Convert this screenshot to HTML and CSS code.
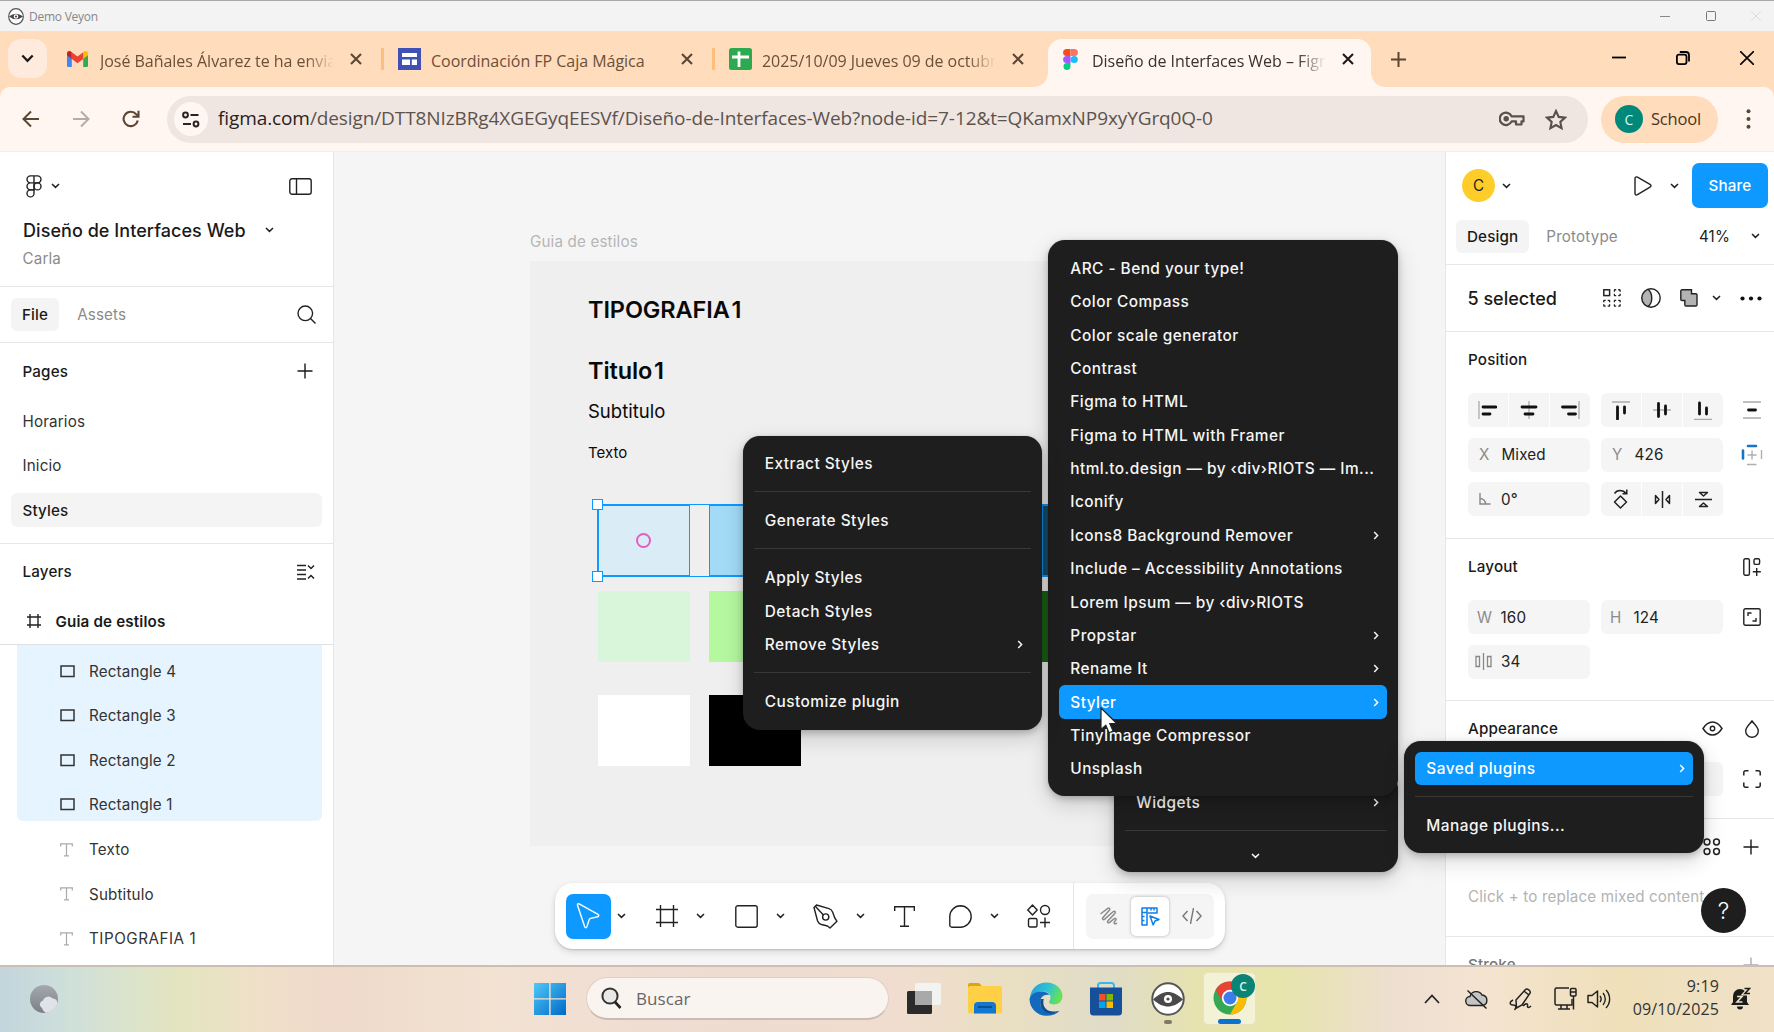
FILE: index.html
```html
<!DOCTYPE html>
<html lang="es">
<head>
<meta charset="utf-8">
<title>Demo Veyon</title>
<link rel="stylesheet" href="styles.css">
</head>
<body>
<svg class="defs" width="0" height="0" aria-hidden="true">
  <symbol id="down" viewBox="0 0 9 6"><path d="M1 1l3.5 3.4L8 1" fill="none" stroke="currentColor" stroke-width="1.5"/></symbol>
  <symbol id="right" viewBox="0 0 6 9"><path d="M1.2 1l3.4 3.5L1.2 8" fill="none" stroke="currentColor" stroke-width="1.5"/></symbol>
  <symbol id="x" viewBox="0 0 12 12"><path d="M1 1l10 10M11 1L1 11" fill="none" stroke="currentColor" stroke-width="2.1"/></symbol>
  <symbol id="rect" viewBox="0 0 15 13"><path d="M1 1h13v10.6H1z" fill="none" stroke="currentColor" stroke-width="1.5"/></symbol>
  <symbol id="tee" viewBox="0 0 13 14"><path d="M.7 3.4V.8h11.6v2.6M6.5.8v12M4 12.9h5" fill="none" stroke="currentColor" stroke-width="1.2"/></symbol>
  <symbol id="plus" viewBox="0 0 16 16"><path d="M8 .5v15M.5 8h15" fill="none" stroke="currentColor" stroke-width="1.4"/></symbol>
  <symbol id="dashed" viewBox="0 0 8 8"><path d="M.8 2.700V1.300a.5.5 0 0 1 .5-.5h1.400M4.700.8h1.400a.5.5 0 0 1 .5.5v1.400M6.600 4.700v1.400a.5.5 0 0 1-.5.5H4.700M2.700 6.600H1.300a.5.5 0 0 1-.5-.5V4.700" fill="none" stroke="currentColor" stroke-width="1.400"/></symbol>
</svg>

<header class="titlebar">
  <svg class="veyon" width="16" height="17" viewBox="0 0 16 17"><ellipse cx="8" cy="8.5" rx="7.3" ry="7.8" fill="#fff" stroke="#555" stroke-width="1.2"/><path d="M1 8.5Q8 2.8 15 8.5 8 14 1 8.5z" fill="#444"/><circle cx="8" cy="8.5" r="2.3" fill="#fff"/><circle cx="8" cy="8.5" r="1.1" fill="#444"/></svg>
  <span class="titlebar-name">Demo Veyon</span>
  <div class="titlebar-controls">
    <svg width="10" height="10" viewBox="0 0 10 10"><path d="M0 5.5h10" stroke="#888"/></svg>
    <svg width="10" height="10" viewBox="0 0 10 10"><rect x=".5" y=".5" width="9" height="9" rx="1" fill="none" stroke="#777"/></svg>
    <svg width="10" height="10" viewBox="0 0 10 10"><path d="M0 0l10 10M10 0L0 10" stroke="#dcdcdc"/></svg>
  </div>
</header>

<div class="tabstrip">
  <div class="tab-search"><svg width="13" height="9" viewBox="0 0 13 9"><path d="M1.3 1.5l5.2 5.3 5.2-5.3" fill="none" stroke="#201a17" stroke-width="2.3"/></svg></div>
  <div class="tab">
    <div class="tab-icon"><svg width="21" height="16" viewBox="0 0 21 16"><path d="M0 3v11.5A1.5 1.5 0 0 0 1.500 16H4.800V7z" fill="#4285f4"/><path d="M21 3v11.500a1.500 1.500 0 0 1-1.500 1.500H16.200V7z" fill="#34a853"/><path d="M0 2.500C0 0 2.500-.6 4.300.8l.5.5V8L0 4.300z" fill="#c5221f"/><path d="M21 2.500c0-2.500-2.500-3.100-4.300-1.700l-.5.5V8L21 4.300z" fill="#fbbc04"/><path d="M4.800 1.200l5.700 4.400 5.700-4.400V8l-5.700 4.300L4.800 8z" fill="#ea4335"/></svg></div>
    <span class="tab-text fade">José Bañales Álvarez te ha enviado</span>
    <svg class="tab-x" width="12" height="12"><use href="#x"/></svg>
  </div>
  <div class="tab">
    <div class="tab-icon"><svg width="23" height="22" viewBox="0 0 23 22"><rect width="23" height="22" fill="#3f51b5"/><path d="M4 5h15v4H4zM4 11.500h8V17H4zM13.800 11.500H19V17h-5.200z" fill="#fff"/></svg></div>
    <span class="tab-text">Coordinación FP Caja Mágica</span>
    <svg class="tab-x" width="12" height="12"><use href="#x"/></svg>
  </div>
  <div class="tab last">
    <div class="tab-icon"><svg width="23" height="22" viewBox="0 0 23 22"><rect width="23" height="22" rx="2.500" fill="#2da94f"/><path d="M10 3.500v15.500M3 9h17" stroke="#fff" stroke-width="2.800"/></svg></div>
    <span class="tab-text fade">2025/10/09 Jueves 09 de octubre</span>
    <svg class="tab-x" width="12" height="12"><use href="#x"/></svg>
  </div>
  <div class="tab active">
    <div class="tab-icon"><svg width="15" height="21" viewBox="0 0 15 21"><path d="M7.500 0H3.600a3.500 3.500 0 0 0 0 7h3.900z" fill="#f24e1e"/><path d="M7.500 0h3.900a3.500 3.500 0 0 1 0 7H7.500z" fill="#ff7262"/><path d="M7.500 7H3.600a3.500 3.500 0 0 0 0 7h3.900z" fill="#a259ff"/><circle cx="11.200" cy="10.500" r="3.600" fill="#1abcfe"/><path d="M7.500 14H3.700a3.500 3.500 0 1 0 3.800 3.500z" fill="#0acf83"/></svg></div>
    <span class="tab-text fade">Diseño de Interfaces Web – Figma</span>
    <svg class="tab-x" width="12" height="12"><use href="#x"/></svg>
  </div>
  <svg class="newtab" width="15" height="15" viewBox="0 0 15 15"><path d="M7.500 0v15M0 7.500h15" stroke="#5b4636" stroke-width="2"/></svg>
  <div class="window-controls">
    <svg width="14" height="14" viewBox="0 0 14 14"><path d="M0 6.500h14" stroke="#000" stroke-width="1.800"/></svg>
    <svg width="14" height="14" viewBox="0 0 14 14"><rect x=".9" y="3.600" width="9.600" height="9.500" rx="2" fill="none" stroke="#000" stroke-width="1.800"/><path d="M3.800 1h6a3.200 3.200 0 0 1 3.200 3.200v6.300" fill="none" stroke="#000" stroke-width="1.800"/></svg>
    <svg width="14" height="14" viewBox="0 0 14 14"><path d="M0 0l14 14M14 0L0 14" stroke="#000" stroke-width="1.600"/></svg>
  </div>
</div>

<div class="browserbar">
  <svg class="nav" width="18" height="18" viewBox="0 0 18 18"><path d="M17 9H2M9 1.500L1.500 9 9 16.500" fill="none" stroke="#5b4636" stroke-width="2"/></svg>
  <svg class="nav" width="18" height="18" viewBox="0 0 18 18"><path d="M1 9h15M9 1.500L16.500 9 9 16.500" fill="none" stroke="#b5aca7" stroke-width="2"/></svg>
  <svg class="nav" width="18" height="18" viewBox="0 0 18 18"><path d="M15.800 10.500A7.200 7.200 0 1 1 14.300 4.300L16 6" fill="none" stroke="#5b4636" stroke-width="2.100"/><path d="M16.500 .8v6h-6" fill="none" stroke="#5b4636" stroke-width="2.100"/></svg>
  <div class="omnibox">
    <div class="site-info"><svg width="18" height="17" viewBox="0 0 18 17"><g fill="none" stroke="#2b2420" stroke-width="2"><circle cx="3.500" cy="4" r="2.400"/><path d="M8.500 4h8M1 13h8"/><circle cx="14" cy="13" r="2.400"/></g></svg></div>
    <span class="url"><b>figma.com</b>/design/DTT8NIzBRg4XGEGyqEESVf/Diseño-de-Interfaces-Web?node-id=7-12&amp;t=QKamxNP9xyYGrq0Q-0</span>
    <svg class="key" width="26" height="16" viewBox="0 0 26 16"><path d="M12.600 5.300A6.200 6.200 0 1 0 12.600 10.400H17V13.500H22.500V10.400H24.500V5.300z" fill="none" stroke="#5b5049" stroke-width="2.200" stroke-linejoin="round"/><circle cx="7.200" cy="7.800" r="2.700" fill="#5b5049"/></svg>
    <svg class="star" width="22" height="21" viewBox="0 0 22 21"><path d="M11 2l2.700 5.900 6.300.7-4.700 4.300 1.300 6.300L11 16l-5.600 3.200 1.300-6.300L2 8.600l6.300-.7z" fill="none" stroke="#5b5049" stroke-width="2.100"/></svg>
  </div>
  <div class="profile"><span class="profile-avatar">C</span><span class="profile-name">School</span></div>
  <svg class="kebab" width="5" height="20" viewBox="0 0 5 20"><circle cx="2.500" cy="2.300" r="2" fill="#5b4636"/><circle cx="2.500" cy="10" r="2" fill="#5b4636"/><circle cx="2.500" cy="17.700" r="2" fill="#5b4636"/></svg>
</div>

<main class="figma">
  <aside class="left">
    <div class="file-head">
      <div class="file-top">
        <svg width="16" height="23" viewBox="0 0 16 23"><g fill="none" stroke="#222" stroke-width="1.400"><path d="M8 .9H4.500a3.500 3.500 0 0 0 0 7H8zM8 .9h3.500a3.500 3.500 0 0 1 0 7H8zM8 7.900H4.500a3.500 3.500 0 0 0 0 7H8z"/><circle cx="11.500" cy="11.400" r="3.500"/><path d="M8 14.900H4.500A3.500 3.500 0 1 0 8 18.400z"/></g></svg>
        <svg class="chev" width="9" height="6"><use href="#down"/></svg>
        <svg class="push" width="23" height="17" viewBox="0 0 23 17"><g fill="none" stroke="#222" stroke-width="1.400"><rect x=".8" y=".8" width="21.400" height="15.400" rx="2.200"/><path d="M7.500 1v15"/></g></svg>
      </div>
      <div class="file-name">Diseño de Interfaces Web <svg class="chev" width="9" height="6"><use href="#down"/></svg></div>
      <div class="file-project">Carla</div>
    </div>
    <div class="left-tabs">
      <span class="pill">File</span><span class="dim">Assets</span>
      <svg class="push" width="19" height="19" viewBox="0 0 19 19"><circle cx="8.300" cy="8.300" r="7.300" fill="none" stroke="#222" stroke-width="1.400"/><path d="M13.500 13.500l5 5" stroke="#222" stroke-width="1.400"/></svg>
    </div>
    <div class="pages">
      <div class="group-title">Pages <svg class="push" width="16" height="16"><use href="#plus"/></svg></div>
      <div class="page">Horarios</div>
      <div class="page">Inicio</div>
      <div class="page current">Styles</div>
    </div>
    <div class="layers-head">
      <div class="group-title">Layers <svg class="push lay" width="18" height="16" viewBox="0 0 18 16"><path d="M0 1.500h9M0 6h9M0 10.500h9M0 15h9" stroke="#222" stroke-width="1.300"/><path d="M11 1.500l3 3 3-3M11 14.500l3-3 3 3" fill="none" stroke="#222" stroke-width="1.500"/></svg></div>
      <div class="frame-row"><svg width="14" height="14" viewBox="0 0 14 14"><path d="M3 0v14M11 0v14M0 3h14M0 11h14" stroke="#222" stroke-width="1.400"/></svg>Guia de estilos</div>
    </div>
    <div class="layers">
      <div class="picked">
        <div class="layer"><svg width="15" height="13"><use href="#rect"/></svg>Rectangle 4</div>
        <div class="layer"><svg width="15" height="13"><use href="#rect"/></svg>Rectangle 3</div>
        <div class="layer"><svg width="15" height="13"><use href="#rect"/></svg>Rectangle 2</div>
        <div class="layer"><svg width="15" height="13"><use href="#rect"/></svg>Rectangle 1</div>
      </div>
      <div class="layer txt"><svg width="13" height="14"><use href="#tee"/></svg>Texto</div>
      <div class="layer txt"><svg width="13" height="14"><use href="#tee"/></svg>Subtitulo</div>
      <div class="layer txt caps"><svg width="13" height="14"><use href="#tee"/></svg>TIPOGRAFIA 1</div>
    </div>
  </aside>

  <section class="canvas">
    <div class="frame-label">Guia de estilos</div>
    <div class="artboard">
      <div class="art-h1">TIPOGRAFIA 1</div>
      <div class="art-h2">Titulo 1</div>
      <div class="art-sub">Subtitulo</div>
      <div class="art-text">Texto</div>
      <div class="swatches blues"><i class="b1"></i><i class="b2"></i><i class="b3"></i><i class="b4"></i><i class="b5"></i>
        <span class="handle tl"></span><span class="handle bl"></span><span class="center-ring"></span>
      </div>
      <div class="swatches greens"><i class="g1"></i><i class="g2"></i><i class="g3"></i><i class="g4"></i><i class="g5"></i></div>
      <div class="swatches mono"><i class="w"></i><i class="k"></i></div>
    </div>

    <div class="tools">
      <span class="tool-active"><svg width="24" height="32" viewBox="0 0 24 32"><path d="M1.500 2.200C1.200 1 2.200.4 3.200.9L22 11.400c1.200.7 1 2-.3 2.400l-7 1.600c-.8.200-1.300.6-1.600 1.300l-2.200 7c-.5 1.300-1.700 1.300-2.200 0z" transform="translate(0 3)" fill="none" stroke="#fff" stroke-width="1.400"/></svg></span>
      <svg class="chev c1" width="9" height="6"><use href="#down"/></svg>
      <svg class="m1" width="22" height="22" viewBox="0 0 22 22"><path d="M4.500 0v22M17.500 0v22M0 4.500h22M0 17.500h22" stroke="#222" stroke-width="1.400"/></svg>
      <svg class="chev c2" width="9" height="6"><use href="#down"/></svg>
      <svg class="m2" width="23" height="23" viewBox="0 0 23 23"><rect x=".8" y=".8" width="21.400" height="21.400" rx="2" fill="none" stroke="#222" stroke-width="1.400"/></svg>
      <svg class="chev c3" width="9" height="6"><use href="#down"/></svg>
      <svg class="m3" width="25" height="25" viewBox="0 0 25 25"><g fill="none" stroke="#222" stroke-width="1.400" stroke-linejoin="round"><path d="M1 3.500L3.500 1 16 4.700c2 .6 3 1.600 3.700 3.500L21.800 14l2.200 3.300-7 6.700-2.500-2-6-1.500c-2-.6-3.300-1.800-4-3.800z"/><path d="M2.300 2.300l8.300 9"/><circle cx="12.700" cy="13" r="3.100"/></g></svg>
      <svg class="chev c4" width="9" height="6"><use href="#down"/></svg>
      <svg class="m4" width="21" height="21" viewBox="0 0 21 21"><path d="M.7 5V.8h19.600V5M10.500.8v19.400M6 20.200h9" fill="none" stroke="#222" stroke-width="1.400"/></svg>
      <svg class="m5" width="23" height="23" viewBox="0 0 23 23"><path d="M11.500.8a10.700 10.700 0 0 1 0 21.400H2.800a2 2 0 0 1-2-2v-8.700A10.700 10.700 0 0 1 11.500.8z" fill="none" stroke="#222" stroke-width="1.400"/></svg>
      <svg class="chev c5" width="9" height="6"><use href="#down"/></svg>
      <svg class="m6" width="24" height="24" viewBox="0 0 24 24"><g fill="none" stroke="#222" stroke-width="1.400" stroke-linejoin="round"><path d="M5.500 1l4.700 5-4.700 5L.8 6z"/><circle cx="18" cy="6" r="4.500"/><rect x="1.500" y="14.500" width="8.500" height="8.500" rx="1.500"/><path d="M18 13.500v10M13 18.500h10"/></g></svg>
      <span class="tools-rule"></span>
      <div class="modes">
        <span><svg width="18" height="18" viewBox="0 0 18 18"><path d="M1 6.500L7.500 1.600c1.600-1.200 3 .2 1.800 1.700L3 10.500c-1.200 1.500.2 2.800 1.700 1.600L13 4.800c1.600-1.300 3.100.1 1.800 1.600L8 13.700c-1.200 1.500.2 2.800 1.700 1.700l4.300-3.600c1.500-1.100 2.600 0 1.700 1.400l-1.300 2c-.8 1.400.5 2.200 2 1.100" fill="none" stroke="#8c8c8c" stroke-width="1.500" stroke-linecap="round"/></svg></span>
        <span class="on"><svg width="19" height="19" viewBox="0 0 19 19"><g fill="none" stroke="#0d7fe8" stroke-width="1.500" stroke-linejoin="round"><path d="M1 18V1h15v5H6v12z"/><path d="M1 5.500h5M6 1v4M10 1v2.500M13 1v2.500M1 9.500h2.500M1 13.500h2.500"/><path d="M9 9l9 3.500-4 1.500-1.800 4z"/></g></svg></span>
        <span><svg width="20" height="16" viewBox="0 0 20 16"><path d="M5.500 3L1 8l4.500 5M14.500 3L19 8l-4.500 5M11.500 0l-3 16" fill="none" stroke="#777" stroke-width="1.400"/></svg></span>
      </div>
    </div>
  </section>

  <aside class="right">
    <div class="r-top">
      <span class="avatar">C</span><svg class="chev" width="9" height="6"><use href="#down"/></svg>
      <svg class="play" width="18" height="20" viewBox="0 0 18 20"><path d="M1 2.500C1 1 2.200.5 3.500 1.200L16 8.300c1.400.8 1.400 2 0 2.800L3.500 18.700C2.200 19.500 1 19 1 17.500z" fill="none" stroke="#222" stroke-width="1.400"/></svg>
      <svg class="chev c6" width="9" height="6"><use href="#down"/></svg>
      <span class="share">Share</span>
    </div>
    <div class="r-tabs"><span class="pill">Design</span><span class="dim">Prototype</span><span class="zoom">41%</span><svg class="chev" width="9" height="6"><use href="#down"/></svg></div>
    <div class="r-selected">
      <span class="big">5 selected</span>
      <svg class="s1" width="18" height="18" viewBox="0 0 18 18"><rect x=".8" y=".8" width="5.800" height="5.800" fill="none" stroke="#222" stroke-width="1.500"/><use href="#dashed" x="10.500" y="0" width="8" height="8"/><use href="#dashed" x="0" y="10.500" width="8" height="8"/><use href="#dashed" x="10.500" y="10.500" width="8" height="8"/></svg>
      <svg class="s2" width="20" height="20" viewBox="0 0 20 20"><path d="M7 1.300a9 9 0 0 0 0 17.400c5-4 5-13.400 0-17.400z" fill="#b3b3b3"/><circle cx="10" cy="10" r="9.200" fill="none" stroke="#222" stroke-width="1.400"/><path d="M7 1.300c5 4 5 13.400 0 17.400" fill="none" stroke="#222" stroke-width="1.400"/></svg>
      <svg class="s3" width="18" height="18" viewBox="0 0 18 18"><path d="M2 .8h9.500v4h4.300a1.200 1.200 0 0 1 1.200 1.200v9.800a1.200 1.200 0 0 1-1.200 1.200H6a1.200 1.200 0 0 1-1.200-1.200v-4.300H2A1.200 1.200 0 0 1 .8 10.300V2A1.200 1.200 0 0 1 2 .8z" fill="#b3b3b3" stroke="#222" stroke-width="1.400"/></svg>
      <svg class="chev s4" width="9" height="6"><use href="#down"/></svg>
      <svg class="s5" width="22" height="5" viewBox="0 0 22 5"><g fill="#111"><circle cx="2.500" cy="2.500" r="2.100"/><circle cx="11" cy="2.500" r="2.100"/><circle cx="19.500" cy="2.500" r="2.100"/></g></svg>
    </div>
    <div class="sec position">
      <div class="sec-title">Position</div>
      <div class="fields">
        <div class="trio">
          <span><svg width="19" height="18" viewBox="0 0 19 18"><path d="M1 0v18" stroke="#aaa" stroke-width="1.300"/><path d="M5 6h13M5 13h7" stroke="#111" stroke-width="2.800" stroke-linecap="round"/></svg></span>
          <span><svg width="18" height="18" viewBox="0 0 18 18"><path d="M9 0v18" stroke="#aaa" stroke-width="1.300"/><path d="M2 6h14M5 13h8" stroke="#111" stroke-width="2.800" stroke-linecap="round"/></svg></span>
          <span><svg width="19" height="18" viewBox="0 0 19 18"><path d="M18 0v18" stroke="#aaa" stroke-width="1.300"/><path d="M1.500 6h13M7.500 13h7" stroke="#111" stroke-width="2.800" stroke-linecap="round"/></svg></span>
        </div>
        <div class="trio">
          <span><svg width="18" height="19" viewBox="0 0 18 19"><path d="M0 1h18" stroke="#aaa" stroke-width="1.300"/><path d="M5.500 6v12M12.500 6v6" stroke="#111" stroke-width="2.800" stroke-linecap="round"/></svg></span>
          <span><svg width="18" height="18" viewBox="0 0 18 18"><path d="M0 9h18" stroke="#aaa" stroke-width="1.300"/><path d="M5.500 2.500v13M12.500 5v8" stroke="#111" stroke-width="2.800" stroke-linecap="round"/></svg></span>
          <span><svg width="18" height="19" viewBox="0 0 18 19"><path d="M0 18.300h18" stroke="#aaa" stroke-width="1.300"/><path d="M5.500 2v11M12.500 7v6" stroke="#111" stroke-width="2.800" stroke-linecap="round"/></svg></span>
        </div>
        <span class="side"><svg width="18" height="18" viewBox="0 0 18 18"><path d="M0 1h18M0 17h18" stroke="#aaa" stroke-width="1.400"/><path d="M5.500 9h7" stroke="#111" stroke-width="2.800" stroke-linecap="round"/></svg></span>
      </div>
      <div class="fields">
        <div class="field"><em>X</em>Mixed</div><div class="field"><em>Y</em>426</div>
        <span class="side"><svg width="22" height="22" viewBox="0 0 22 22"><path d="M7 2h8M2 6.500v8" stroke="#1675c8" stroke-width="2.600" stroke-linecap="round"/><path d="M20.500 6v9M6 20.500h9.500M11 6.500v9M6.500 11h9" stroke="#b0b0b0" stroke-width="1.400"/></svg></span>
      </div>
      <div class="fields">
        <div class="field"><svg width="12" height="12" viewBox="0 0 12 12"><path d="M1 0v11h10.500M1 5.500a5.500 5.500 0 0 1 5.500 5.500" fill="none" stroke="#888" stroke-width="1.400"/></svg>0°</div>
        <div class="trio">
          <span><svg width="16" height="20" viewBox="0 0 16 20"><path d="M7.500 7l6 6-6 6-6-6z" fill="none" stroke="#222" stroke-width="1.500" stroke-linejoin="round"/><path d="M1.500 4.500C4 .5 10 .5 13 4.500M13.800.5v4.300H9.500" fill="none" stroke="#222" stroke-width="1.500"/></svg></span>
          <span><svg width="17" height="17" viewBox="0 0 17 17"><path d="M8.500 0v17M1.500 4.500v8L5 8.500zM15.500 4.500v8L12 8.500z" fill="none" stroke="#222" stroke-width="1.500" stroke-linejoin="round"/></svg></span>
          <span><svg width="17" height="17" viewBox="0 0 17 17"><path d="M0 8.500h17M4.500 1.500h8L8.500 5zM4.500 15.500h8L8.500 12z" fill="none" stroke="#222" stroke-width="1.500" stroke-linejoin="round"/></svg></span>
        </div>
      </div>
    </div>
    <div class="sec layout">
      <div class="sec-title">Layout <svg class="end" width="18" height="18" viewBox="0 0 18 18"><g fill="none" stroke="#222" stroke-width="1.400"><rect x=".8" y=".8" width="5.600" height="16.400" rx="1.500"/><rect x="11" y=".8" width="5.600" height="5.600" rx="1.500"/><path d="M13.700 10v8M9.800 13.800h8"/></g></svg></div>
      <div class="fields">
        <div class="field"><em>W</em>160</div><div class="field"><em>H</em>124</div>
        <span class="side"><svg width="18" height="18" viewBox="0 0 18 18"><g fill="none" stroke="#222" stroke-width="1.400"><rect x=".8" y=".8" width="16.400" height="16.400" rx="1.500"/><path d="M5 8V5h3.500M13 10v3H9.500"/></g></svg></span>
      </div>
      <div class="fields"><div class="field"><svg width="17" height="17" viewBox="0 0 17 17"><path d="M1 3.500h3.500v10H1zM12.500 3.500H16v10h-3.500zM8.500 0v17" fill="none" stroke="#888" stroke-width="1.300"/></svg>34</div></div>
    </div>
    <div class="sec appearance">
      <div class="sec-title">Appearance
        <svg class="end eye" width="21" height="15" viewBox="0 0 21 15"><path d="M1 7.500C4 2.800 7 1 10.500 1S17 2.800 20 7.500C17 12.200 14 14 10.500 14S4 12.200 1 7.500z" fill="none" stroke="#222" stroke-width="1.400"/><circle cx="10.500" cy="7.500" r="2.200" fill="none" stroke="#222" stroke-width="1.400"/></svg>
        <svg class="drop" width="16" height="18" viewBox="0 0 16 18"><path d="M8 1c2 3 6.300 6 6.300 10a6.300 6.300 0 0 1-12.600 0C1.700 7 6 4 8 1z" fill="none" stroke="#222" stroke-width="1.400"/></svg></div>
      <div class="fields"><div class="field"></div><div class="field"></div>
        <span class="side"><svg width="18" height="18" viewBox="0 0 18 18"><path d="M.8 5.500V2.500A1.700 1.700 0 0 1 2.500.8h3M12.500.8h3a1.700 1.700 0 0 1 1.700 1.700v3M17.200 12.500v3a1.700 1.700 0 0 1-1.700 1.700h-3M5.500 17.200h-3a1.700 1.700 0 0 1-1.700-1.700v-3" fill="none" stroke="#222" stroke-width="1.500"/></svg></span>
      </div>
    </div>
    <div class="sec fill">
      <div class="sec-title">Fill
        <svg class="end four" width="18" height="18" viewBox="0 0 18 18"><g fill="none" stroke="#222" stroke-width="1.500"><circle cx="4" cy="4" r="2.900"/><circle cx="13.500" cy="4" r="2.900"/><circle cx="4" cy="13.500" r="2.900"/><circle cx="13.500" cy="13.500" r="2.900"/></g></svg>
        <svg class="add" width="16" height="16"><use href="#plus"/></svg></div>
      <div class="note">Click + to replace mixed content</div>
    </div>
    <div class="sec stroke">
      <div class="sec-title">Stroke <svg class="end add" width="16" height="16"><use href="#plus"/></svg></div>
    </div>
  </aside>

  <div class="help">?</div>

  <div class="menu menu-main">
    <div class="item">Widgets <svg width="6" height="9"><use href="#right"/></svg></div>
    <hr>
    <div class="more"><svg width="9" height="6"><use href="#down"/></svg></div>
  </div>
  <div class="menu menu-plugins">
    <div class="item">ARC - Bend your type!</div>
    <div class="item">Color Compass</div>
    <div class="item">Color scale generator</div>
    <div class="item">Contrast</div>
    <div class="item">Figma to HTML</div>
    <div class="item">Figma to HTML with Framer</div>
    <div class="item">html.to.design — by ‹div›RIOTS — Im...</div>
    <div class="item">Iconify</div>
    <div class="item">Icons8 Background Remover <svg width="6" height="9"><use href="#right"/></svg></div>
    <div class="item">Include – Accessibility Annotations</div>
    <div class="item">Lorem Ipsum — by ‹div›RIOTS</div>
    <div class="item">Propstar <svg width="6" height="9"><use href="#right"/></svg></div>
    <div class="item">Rename It <svg width="6" height="9"><use href="#right"/></svg></div>
    <div class="item hot">Styler <svg width="6" height="9"><use href="#right"/></svg></div>
    <div class="item">TinyImage Compressor</div>
    <div class="item">Unsplash</div>
  </div>
  <div class="menu menu-styler">
    <div class="item">Extract Styles</div>
    <hr>
    <div class="item">Generate Styles</div>
    <hr>
    <div class="item">Apply Styles</div>
    <div class="item">Detach Styles</div>
    <div class="item">Remove Styles <svg width="6" height="9"><use href="#right"/></svg></div>
    <hr>
    <div class="item">Customize plugin</div>
  </div>
  <div class="menu menu-saved">
    <div class="item hot">Saved plugins <svg width="6" height="9"><use href="#right"/></svg></div>
    <hr>
    <div class="item">Manage plugins...</div>
  </div>
  <svg class="cursor" width="18" height="28" viewBox="0 0 18 28"><path d="M1 1v21.500l4.800-4.300 3.300 7.600 4-1.800-3.300-7.300H17z" fill="#fff" stroke="#222" stroke-width="1.200"/></svg>
</main>

<footer class="taskbar">
  <svg class="weather" width="30" height="30" viewBox="0 0 30 30"><defs><linearGradient id="moon" x1="0" y1="0" x2="0" y2="1"><stop offset="0" stop-color="#a4a9b0"/><stop offset="1" stop-color="#7b8087"/></linearGradient></defs><circle cx="15" cy="15" r="14" fill="url(#moon)"/><path d="M13 24a4 4 0 0 1 1-7.500 6 6 0 0 1 10-2 5 5 0 0 1 4.500 5A14 14 0 0 1 17 29a8 8 0 0 1-4-5z" fill="#dfe3e8"/></svg>
  <svg class="start" width="34" height="34" viewBox="0 0 34 34"><defs><linearGradient id="win" x1="0" y1="0" x2="1" y2="1"><stop offset="0" stop-color="#4fc8f7"/><stop offset="1" stop-color="#0068c9"/></linearGradient></defs><path d="M1 1h15.200v15.200H1zM17.600 1h15.400v15.200H17.600zM1 17.600h15.200V33H1zM17.600 17.600h15.400V33H17.600z" fill="url(#win)"/></svg>
  <div class="search"><svg width="21" height="22" viewBox="0 0 21 22"><circle cx="9" cy="9" r="7.600" fill="#e8e8e8" stroke="#333" stroke-width="2"/><path d="M14 15l5.500 6" stroke="#222" stroke-width="2.600"/></svg>Buscar</div>
  <svg class="taskview" width="34" height="32" viewBox="0 0 34 32"><rect x="0" y="8" width="25" height="23" rx="1.500" fill="#2b2b2b"/><rect x="8" y="0" width="26" height="22" rx="1.500" fill="#f3f3f1"/><path d="M8 8h17v14H8z" fill="#a9a9a9"/></svg>
  <svg class="explorer" width="34" height="31" viewBox="0 0 34 31"><path d="M0 2a2 2 0 0 1 2-2h9l3 3v6H0z" fill="#e0a30c"/><rect y="3" width="34" height="27.500" rx="2" fill="#ffcf45"/><path d="M6 30.500V23a4 4 0 0 1 4-4h14a4 4 0 0 1 4 4v7.500z" fill="#1377cf"/><path d="M10 24h14" stroke="#0b4f94" stroke-width="2"/></svg>
  <svg class="edge" width="34" height="34" viewBox="0 0 34 34"><defs><linearGradient id="e1" x1="0" y1="0" x2="1" y2=".3"><stop offset="0" stop-color="#229be0"/><stop offset=".6" stop-color="#30c4cf"/><stop offset="1" stop-color="#66e05a"/></linearGradient></defs><path d="M1 16C2 6 9 .5 17.500.5 27 .5 33.500 7 33.500 14c0 5-4 8.500-8.500 8.500-3 0-5-1-5-2.500 0-1 1.500-1.500 1.500-4.500 0-3.500-3-6-7.500-6C8 9.500 3 12 1 16z" fill="url(#e1)"/><path d="M.5 17C1.500 12.500 6 9.500 12.500 9.500c4 0 6.500 1.500 8 3.500-5-1.500-9.500 2-9.500 7.500 0 6 5 10.500 11.500 10.500 3 0 6-1 8.500-2.500C28 32 23 33.800 17.500 33.800 8 33.800.5 26 .5 17z" fill="#1469bd"/><path d="M11.500 17c-1 5 0 9.500 4 12.500 4.500 3.300 11 2 14.500-.5-3 .5-12 2-15-5-1-2.500-.7-5-.3-7z" fill="#0c4f96"/></svg>
  <svg class="store" width="34" height="34" viewBox="0 0 34 34"><path d="M9 7V3.500A2.500 2.500 0 0 1 11.500 1h11A2.500 2.500 0 0 1 25 3.500V7" fill="none" stroke="#35b8ec" stroke-width="2"/><path d="M1 5.500h32V30a3.500 3.500 0 0 1-3.500 3.500h-25A3.500 3.500 0 0 1 1 30z" fill="#17509a"/><path d="M10 12h6.500v6.500H10z" fill="#f25022"/><path d="M17.500 12H24v6.500h-6.500z" fill="#7fba00"/><path d="M10 19.500h6.500V26H10z" fill="#00a4ef"/><path d="M17.500 19.500H24V26h-6.500z" fill="#ffb900"/></svg>
  <div class="app-veyon"><svg width="34" height="34" viewBox="0 0 34 34"><circle cx="17" cy="17" r="15.700" fill="#fff" stroke="#555" stroke-width="2"/><path d="M2 17.500C8 12 12 10 17 10s9 2 15 7.500C26 22.500 22 24.500 17 24.500S8 22.500 2 17.500z" fill="#4a4a4a"/><circle cx="17" cy="17" r="4" fill="#fff"/><circle cx="17" cy="17" r="1.600" fill="#4a4a4a"/></svg><i></i></div>
  <div class="app-chrome">
    <svg width="34" height="34" viewBox="0 0 34 34"><circle cx="17" cy="17" r="16.500" fill="#34a853"/><path d="M2.700 8.800A16.500 16.500 0 0 1 31.300 8.800L17 9.200 9.800 21z" fill="#ea4335"/><path d="M31.300 8.800A16.500 16.500 0 0 1 17 33.500L24.500 20 17 8.800z" fill="#fbbc04"/><circle cx="17" cy="17" r="8.200" fill="#fff"/><circle cx="17" cy="17" r="6.500" fill="#3b7ded"/></svg>
    <b class="badge">C</b><i></i>
  </div>
  <div class="tray">
    <svg class="y1" width="16" height="10" viewBox="0 0 16 10"><path d="M1 9l7-7.500L15 9" fill="none" stroke="#222" stroke-width="1.700"/></svg>
    <svg class="y2" width="23" height="20" viewBox="0 0 23 20"><path d="M5.500 16.500a4.500 4.500 0 0 1-.5-9 6.500 6.500 0 0 1 12-1.500 5.300 5.300 0 0 1 .5 10.500z" fill="#c4c4c4" stroke="#222" stroke-width="1.400"/><path d="M2.500 1.500l19 18" stroke="#222" stroke-width="1.500"/></svg>
    <svg class="y3" width="24" height="24" viewBox="0 0 24 24"><path d="M7 13L16.500 2.500c1.500-1.500 5.800 1.500 4.500 3.700L13 18l-5.500 3z M4 13c-4 2-3.500 5 0 5 3 0 4 2 1.500 5M14 19c3-3 5-3 4.500 0-.3 2 1.500 2 3.500 0M15.500 4.500l4.500 3.500" fill="none" stroke="#222" stroke-width="1.500"/></svg>
    <svg class="y4" width="23" height="23" viewBox="0 0 23 23"><g fill="none" stroke="#222" stroke-width="1.500"><path d="M15 1H2.500A1.500 1.500 0 0 0 1 2.500v14A1.500 1.500 0 0 0 2.500 18H18v-6M7 18v4M13 18v4M4 22h12"/><rect x="16.500" y="1.500" width="5.500" height="7.500" rx="1"/><path d="M19.500 9v13.500M17 5h5"/></g></svg>
    <svg class="y5" width="24" height="22" viewBox="0 0 24 22"><path d="M1 7.500h4L10.500 3v16L5 14.500H1z" fill="none" stroke="#222" stroke-width="1.500" stroke-linejoin="round"/><path d="M13 8a5 5 0 0 1 0 6M16 5a9 9 0 0 1 0 12M19 2a13 13 0 0 1 0 18" fill="none" stroke="#222" stroke-width="1.400"/></svg>
    <div class="clock"><span>9:19</span><span>09/10/2025</span></div>
    <svg class="y6" width="20" height="23" viewBox="0 0 20 23"><path d="M9 2a7 7 0 0 1 7 7v6l2 3H0l2-3V9a7 7 0 0 1 7-7z" fill="#1c1c1c"/><path d="M6 19.500h6a3 3 0 0 1-6 0z" fill="#1c1c1c"/><path d="M13.500 1.500h5L14 6.500h5" fill="none" stroke="#f0e2c4" stroke-width="4"/><path d="M13.500 1.500h5L14 6.500h5" fill="none" stroke="#1c1c1c" stroke-width="1.600"/><path d="M6 9.500h5l-5 5.500h5.500" fill="none" stroke="#f0e2c4" stroke-width="1.600"/></svg>
  </div>
</footer>
</body>
</html>
```
FILE: styles.css
```css
* { box-sizing: border-box; }
body {
  margin: 0;
  width: 1774px;
  height: 1032px;
  overflow: hidden;
  display: flex;
  flex-direction: column;
  font-family: Inter, "Liberation Sans", sans-serif;
  font-size: 15.2px;
  color: #222;
  background: #fff;
}
svg { display: block; flex: none; }
.defs { position: absolute; }
i, em { font-style: normal; }

/* Veyon window title */
.titlebar {
  flex: none; height: 31px;
  display: flex; align-items: center;
  padding: 0 13px 0 8px;
  background: #f3f3f3;
  border-top: 1px solid #a8a8a8;
  font-family: "Open Sans", "Noto Sans", sans-serif;
  font-size: 12px; color: #878787;
}
.titlebar-name { margin-left: 5px; letter-spacing: -.25px; }
.titlebar-controls { margin-left: auto; display: flex; gap: 35.500px; }

/* Chrome tabs */
.tabstrip {
  flex: none; height: 56px;
  display: flex; align-items: flex-start;
  padding: 8px 20px 0 8px;
  background: #ffdcbc;
  font-family: "Open Sans", "Noto Sans", sans-serif;
}
.tab-search {
  width: 39px; height: 39px; border-radius: 13px;
  background: #ffebdd;
  display: flex; align-items: center; justify-content: center;
  margin-right: 6px;
}
.tab { width: 331px; height: 40px; display: flex; align-items: center; position: relative; padding-left: 14px; color: #6b5039; }
.tab::after { content: ""; position: absolute; right: 0; top: 9px; width: 3px; height: 22px; background: #fcbf7c; }
.tab.last::after, .tab.active::after { display: none; }
.tab-icon { width: 33px; }
.tab-text { width: 234px; font-size: 16px; letter-spacing: -.03px; white-space: nowrap; overflow: hidden; padding-top: 3px; line-height: 24px; }
.fade { -webkit-mask-image: linear-gradient(90deg, #000 88%, transparent 100%); mask-image: linear-gradient(90deg, #000 88%, transparent 100%); }
.tab-x { margin-left: 15.500px; color: #5b4636; }
.tab.active { width: 323px; height: 48px; padding: 0 0 8px 15px; margin-left: 2px; border-radius: 14px 14px 0 0; background: #fff6f2; color: #3d3029; }
.tab.active::before {
  content: ""; position: absolute; left: -14px; right: -14px; bottom: 0; height: 14px;
  background: radial-gradient(circle at 0 0, transparent 13.500px, #fff6f2 14px) 0 0 / 14px 14px no-repeat,
              radial-gradient(circle at 100% 0, transparent 13.500px, #fff6f2 14px) 100% 0 / 14px 14px no-repeat;
}
.tab.active .tab-icon { width: 29px; }
.tab.active .tab-x { color: #201a17; margin-left: 16px; }
.newtab { margin: 12.500px 0 0 20px; }
.window-controls { margin: 12px 0 0 auto; display: flex; gap: 50px; }

/* address bar */
.browserbar {
  flex: none; height: 65px;
  display: flex; align-items: center;
  padding: 0 23px 0 22px;
  background: #fff6f2;
  border-bottom: 1px solid #f9e9df;
  border-radius: 10px 10px 0 0;
  box-shadow: 0 -10px 0 #ffdcbc;
  clip-path: inset(0);
  font-family: "Open Sans", "Noto Sans", sans-serif;
}
.nav { margin-right: 32px; }
.omnibox { width: 1421px; height: 47px; margin-left: -5px; border-radius: 24px; background: #efe6e2; display: flex; align-items: center; padding: 0 21px 0 7px; }
.site-info { width: 34px; height: 34px; border-radius: 50%; background: #fff6f2; display: flex; align-items: center; justify-content: center; margin-right: 10px; }
.url { font-size: 19px; color: #5d534d; letter-spacing: -.1px; white-space: nowrap; padding-bottom: 2px; }
.url b { font-weight: 400; color: #2a211c; }
.key { margin-left: auto; margin-right: 20px; }
.profile { width: 117px; height: 47px; border-radius: 24px; margin-left: 13px; background: #ffdcbc; display: flex; align-items: center; padding-left: 14px; }
.profile-avatar { width: 28px; height: 28px; border-radius: 50%; background: #00897b; color: #d8f3ee; font-size: 14px; display: flex; align-items: center; justify-content: center; margin-right: 8px; }
.profile-name { font-size: 16.500px; color: #4b3524; letter-spacing: -.2px; padding-bottom: 2px; }
.kebab { margin-left: auto; }

/* Figma */
.figma { height: 813px; display: flex; position: relative; overflow: hidden; background: #f5f5f5; letter-spacing: .01em; }
.push { margin-left: auto; }
.chev { color: #222; }
.dim { color: #8b8b8b; }
.pill { height: 33px; border-radius: 6px; background: #f4f4f4; display: flex; align-items: center; padding: 0 11px; font-weight: 550; color: #1a1a1a; }

.left { width: 334px; border-right: 1px solid #e6e6e6; background: #fff; flex: none; }
.file-head { height: 135px; border-bottom: 1px solid #e6e6e6; }
.file-top { height: 68px; display: flex; align-items: center; padding: 0 21px 0 26px; }
.file-top .chev { margin-left: 9px; }
.file-name { height: 20px; display: flex; align-items: center; padding-left: 23px; font-size: 18px; letter-spacing: .003em; font-weight: 550; color: #1a1a1a; }
.file-name .chev { margin-left: 19px; }
.file-project { padding-left: 22.500px; height: 38px; line-height: 38px; color: #8b8b8b; }
.left-tabs { height: 56px; border-bottom: 1px solid #e6e6e6; display: flex; align-items: center; padding: 0 17px 0 11px; }
.left-tabs .dim { margin-left: 18px; }
.pages { height: 201px; border-bottom: 1px solid #e6e6e6; }
.group-title { height: 56px; display: flex; align-items: center; padding: 0 20px 0 22.500px; font-weight: 550; color: #1a1a1a; }
.page { height: 34px; margin: 0 11px 10.500px; padding-left: 11.500px; border-radius: 6px; display: flex; align-items: center; color: #333; }
.group-title + .page { margin-top: 5px; }
.current { background: #f4f4f4; font-weight: 550; color: #1a1a1a; }
.layers-head { height: 101px; border-bottom: 1px solid #e0e0e0; }
.layers-head .group-title { height: 55px; }
.lay { margin-right: -2px; }
.frame-row { height: 44px; display: flex; align-items: center; gap: 15px; padding-left: 26.500px; font-weight: 600; color: #1a1a1a; }
.picked { margin: 0 11px 0 17px; height: 176px; background: #e5f4ff; border-radius: 0 0 6px 6px; padding: 4px 0 0; }
.layer { height: 44.500px; display: flex; align-items: center; padding-left: 42.500px; color: #333; gap: 14.500px; }
.picked + .layer { margin-top: 6.500px; }
.txt { padding-left: 59.500px; gap: 16.500px; }
.caps { letter-spacing: .035em; }
.txt svg { color: #aaa; }

.canvas { flex: 1; position: relative; }
.frame-label { position: absolute; left: 196px; top: 80px; line-height: 20px; color: #b5b5b5; font-size: 15.200px; }
.artboard { position: absolute; left: 196px; top: 109px; width: 860px; height: 585px; background: #efefef; color: #0a0a0a; white-space: nowrap; letter-spacing: 0; }
.artboard > div { position: absolute; left: 58px; }
.art-h1, .art-h2 { font-size: 23.500px; line-height: 30px; font-weight: 600; letter-spacing: -.1px; word-spacing: -4px; }
.art-h1 { top: 34px; }
.art-h2 { top: 95px; }
.art-sub { top: 138px; font-size: 18.500px; line-height: 24px; }
.art-text { top: 181px; font-size: 15px; line-height: 22px; }
.artboard > .swatches { left: 68px; display: flex; gap: 19px; }
.swatches i { width: 92px; height: 71px; }
.artboard > .blues { top: 244px; margin: -1px; border: 1.500px solid #0d99ff; }
.blues i { border: 1px solid #0d99ff; height: 71px; }
.greens { top: 330px; }
.mono { top: 434px; }
.b1 { background: #daedf7; } .b2 { background: #a3dbf7; } .b3 { background: #52b7e6; } .b4 { background: #24799f; } .b5 { background: #17506e; }
.g1 { background: #d9f6db; } .g2 { background: #b5f8a0; } .g3 { background: #6fd65c; } .g4 { background: #2f8a2a; } .g5 { background: #1a6414; }
.w { background: #fff; } .k { background: #000; }
.handle { position: absolute; left: -6px; width: 11px; height: 11px; background: #fff; border: 1.500px solid #0d99ff; }
.tl { top: -6px; } .bl { bottom: -6px; }
.center-ring { position: absolute; left: 38px; top: 28px; width: 15px; height: 15px; border: 2px solid #e65cc0; border-radius: 50%; }

.tools { position: absolute; left: 221px; top: 731px; width: 670px; height: 66px; border-radius: 18px; background: #fff; box-shadow: 0 1px 2px rgba(0,0,0,.15), 0 3px 7px rgba(0,0,0,.12); display: flex; align-items: center; padding: 0 11px; }
.tool-active { width: 45px; height: 45px; border-radius: 7px; background: #0d99ff; display: flex; align-items: center; justify-content: center; }
.c1 { margin-left: 6.500px; } .c2, .c3, .c4, .c5 { margin-left: 18px; }
.m1 { margin-left: 30px; } .m2 { margin-left: 29.500px; } .m3 { margin-left: 28px; } .m4 { margin-left: 29px; } .m5 { margin-left: 34px; } .m6 { margin-left: 28.500px; }
.tools-rule { width: 1px; height: 66px; background: #e6e6e6; margin-left: 22px; }
.modes { margin-left: 12px; width: 128px; height: 45px; border-radius: 7px; background: #f5f5f5; display: flex; align-items: center; }
.modes span { width: 45px; display: flex; justify-content: center; }
.modes .on { width: 38px; height: 39px; align-items: center; background: #fff; border-radius: 5px; box-shadow: 0 0 3px rgba(0,0,0,.3); }

.right { width: 329px; border-left: 1px solid #e6e6e6; background: #fff; flex: none; }
.r-top { height: 67px; display: flex; align-items: center; padding: 0 6px 0 16px; }
.avatar { width: 33px; height: 33px; border-radius: 50%; background: #ffcd29; display: flex; align-items: center; justify-content: center; }
.r-top .chev { margin-left: 7px; }
.play { margin-left: auto; }
.r-top .c6 { margin-left: 18px; margin-right: 13px; }
.share { width: 76px; height: 45px; border-radius: 7px; background: #0d99ff; color: #fff; display: flex; align-items: center; justify-content: center; font-weight: 500; }
.r-tabs { display: flex; align-items: center; height: 45px; padding: 0 14px 11px 10px; }
.r-tabs .dim { margin-left: 17px; }
.zoom { margin-left: auto; margin-right: 21px; }
.r-selected { height: 67px; border-top: 1px solid #e6e6e6; display: flex; align-items: center; padding: 0 12px 0 21.500px; }
.big { font-size: 18px; letter-spacing: 0; font-weight: 500; color: #1a1a1a; width: 135px; white-space: nowrap; }
.s2 { margin-left: 20px; } .s3 { margin-left: 19.500px; } .s4 { margin-left: 14px; } .s5 { margin-left: auto; }
.sec { border-top: 1px solid #e6e6e6; padding-left: 22px; }
.position { height: 207px; } .layout { height: 162px; } .appearance, .fill { height: 118px; }
.sec-title { height: 55px; margin-bottom: 6px; display: flex; align-items: center; font-weight: 550; color: #1a1a1a; padding-right: 13.500px; }
.end { margin-left: auto; }
.drop { margin-left: 21px; margin-right: 1px; }
.four + .add { margin-left: 21.500px; } .add { margin-right: 2px; }
.fields { display: flex; align-items: center; height: 34px; margin-bottom: 10.600px; gap: 11px; }
.field { width: 122px; height: 34px; border-radius: 6px; background: #f5f5f5; display: flex; align-items: center; padding-left: 11px; color: #222; }
.field em { width: 22.500px; color: #8b8b8b; }
.field svg { margin-right: 10px; }
.layout .field em { margin-left: -2px; width: 23.500px; }
.layout .field svg { margin: 0 9px 0 -4px; }
.trio { width: 122px; display: flex; gap: 1.500px; border-radius: 6px; overflow: hidden; }
.trio span { flex: 1; height: 34px; background: #f5f5f5; display: flex; align-items: center; justify-content: center; }
.side { width: 34px; display: flex; justify-content: center; margin-left: .500px; }
.note { height: 34px; line-height: 34px; color: #b3b3b3; white-space: nowrap; }
.stroke .sec-title { color: #777; }
.stroke svg { opacity: .6; }

.help { position: absolute; left: 1701px; top: 736px; width: 45px; height: 45px; border-radius: 50%; background: #1e1e1e; color: #fff; font-size: 23px; font-weight: 300; display: flex; align-items: center; justify-content: center; }

/* dark menus */
.menu { position: absolute; border-radius: 17px; background: #1e1e1e; color: #f5f5f5; padding: 11px; box-shadow: 0 3px 7px rgba(0,0,0,.2), 0 8px 22px rgba(0,0,0,.16), 0 0 1px rgba(0,0,0,.3); font-weight: 450; font-size: 15.400px; letter-spacing: .03em; }
.item { height: 33.380px; border-radius: 6px; display: flex; align-items: center; justify-content: space-between; padding: 0 8px 0 11.300px; white-space: nowrap; }
.hot { background: #0d99ff; color: #fff; }
.menu hr { border: 0; height: 1px; margin: 11px 0 11.600px; background: #383838; }
.menu-main { left: 1114px; top: 620px; width: 284px; height: 100px; padding-top: 14px; }
.menu-main hr { margin-bottom: 22px; }
.more { display: flex; justify-content: center; padding-right: 2px; }
.menu-plugins { left: 1048px; top: 88px; width: 350px; height: 556px; padding-top: 11.600px; }
.menu-styler { left: 742.500px; top: 284px; width: 299.500px; height: 294px; }
.menu-saved { left: 1404px; top: 589px; width: 300px; height: 112px; }
.menu-saved hr { margin-bottom: 11px; }
.cursor { position: absolute; left: 1100px; top: 555px; }

/* Windows taskbar */
.taskbar {
  flex: none; height: 67px; position: relative;
  display: flex; align-items: center;
  padding-bottom: 1.500px;
  border-top: 2px solid #cbbfb2;
  background: linear-gradient(90deg, #c3d5dd 0, #cfe0da 70px, #e4e5bf 180px, #efe0c9 260px, #efdacb 330px, #f2e2d2 500px, #efdcd2 680px, #f0ddcf 900px, #e9dfc2 1010px, #e0dcc8 1110px, #e7e3ac 1210px, #e7e4ac 1280px, #eedfd2 1400px, #f4e3d0 1480px, #efe0ba 1620px, #f0e1c8 1774px);
  font-family: "Open Sans", "Noto Sans", sans-serif;
}
.weather { margin-left: 29px; }
.start { margin-left: 474px; }
.search { margin-left: 19px; width: 303px; height: 43px; border-radius: 22px; background: #faf4f0; border: 1px solid #ddd0c6; border-bottom: 2px solid #c9bdb3; display: flex; align-items: center; padding-left: 14px; gap: 14px; font-size: 17px; letter-spacing: .1px; color: #666; }
.taskview { margin-left: 18px; } .explorer { margin-left: 27px; } .edge { margin-left: 27px; } .store { margin-left: 26px; }
.app-veyon { margin-left: 28px; height: 52px; padding-top: 9px; display: flex; flex-direction: column; align-items: center; justify-content: space-between; }
.app-veyon i { width: 8px; height: 4px; border-radius: 2px; background: #7f7b66; margin-bottom: 1px; }
.app-chrome { margin-left: 18px; width: 53px; height: 53px; border-radius: 5px; background: #f4f2d6; border: 1px solid #e6e3bf; padding-top: 8px; display: flex; flex-direction: column; align-items: center; justify-content: space-between; position: relative; }
.app-chrome i { width: 23px; height: 5px; border-radius: 3px; background: #0b72d0; }
.badge { position: absolute; left: 27px; top: 1px; width: 24px; height: 24px; border-radius: 50%; background: #0b8375; color: #d8f3ee; font-size: 12px; font-weight: 600; display: flex; align-items: center; justify-content: center; }
.tray { margin-left: auto; display: flex; align-items: center; padding-right: 23px; }
.y2 { margin-left: 25px; } .y3 { margin-left: 21.500px; } .y4 { margin-left: 21px; } .y5 { margin-left: 10px; } .y6 { margin-left: 12px; }
.clock { width: 108px; display: flex; flex-direction: column; align-items: flex-end; margin-top: -2px; font-size: 16px; line-height: 22.500px; color: #333; letter-spacing: .13px; }
```
